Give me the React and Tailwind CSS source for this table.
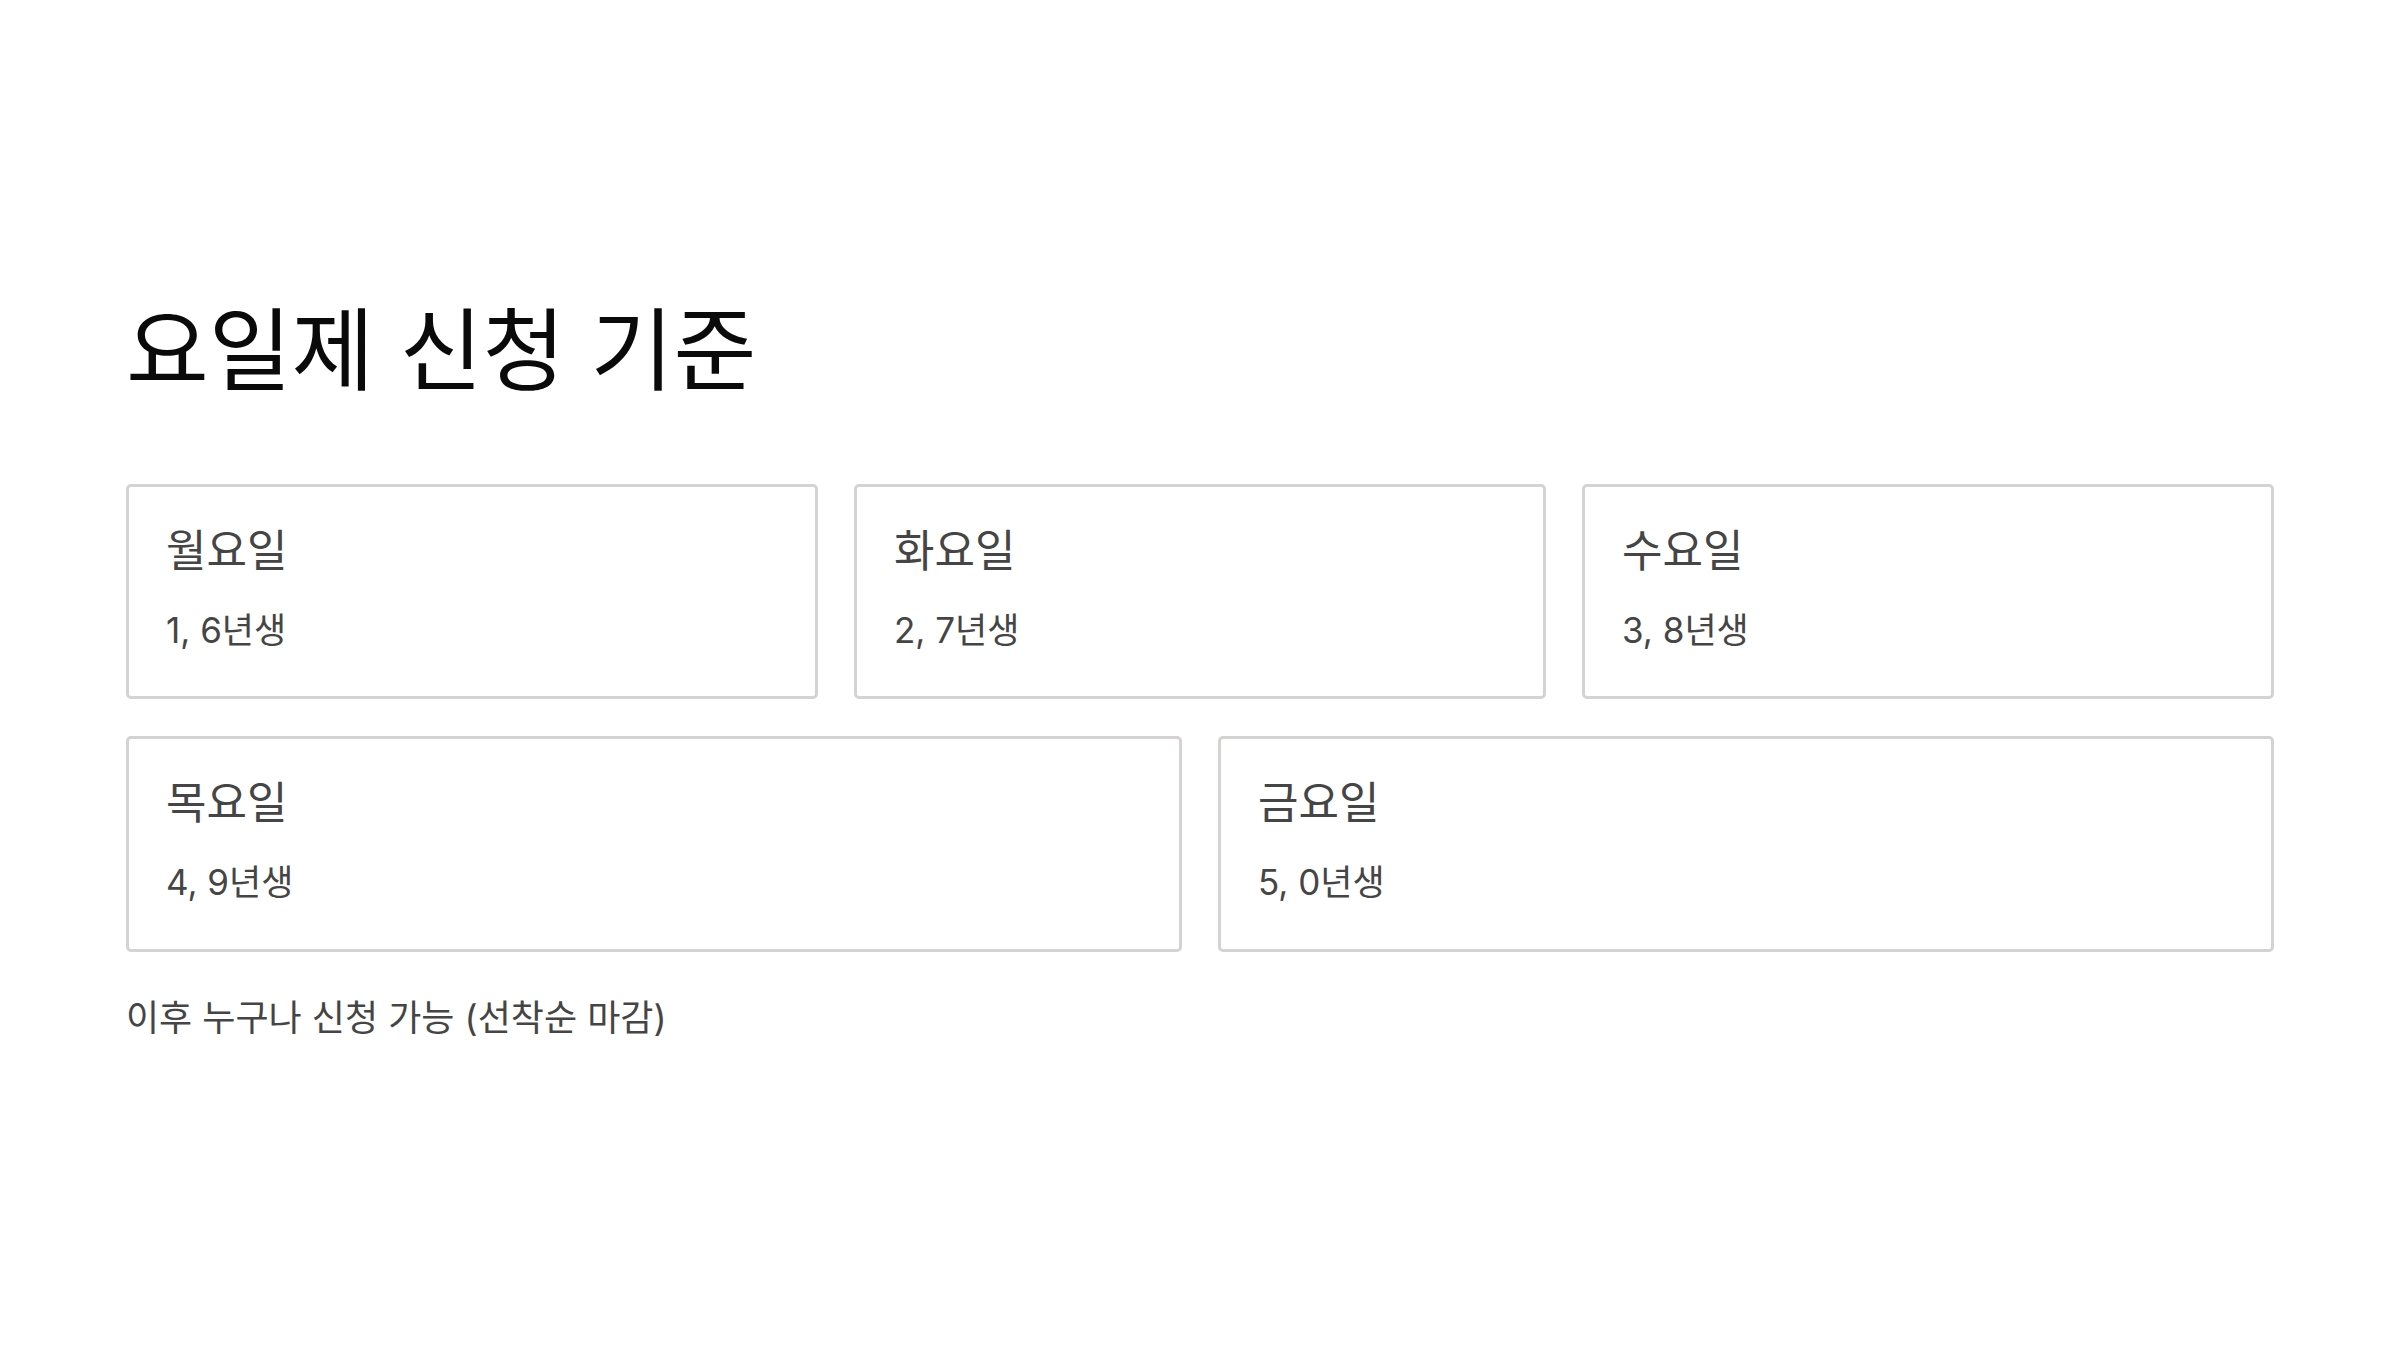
export default function App() {
  const row1 = [
    { day: "월요일", desc: "1, 6년생" },
    { day: "화요일", desc: "2, 7년생" },
    { day: "수요일", desc: "3, 8년생" },
  ];
  const row2 = [
    { day: "목요일", desc: "4, 9년생" },
    { day: "금요일", desc: "5, 0년생" },
  ];
  const Card = ({ day, desc, h }) => (
    <div className={`border-[3px] border-[#d5d3d2] rounded-[5px] bg-white px-[37px] pt-[42px] ${h}`}>
      <div className="text-[44px] leading-none text-[#454545]">{day}</div>
      <div className="mt-[40px] text-[35px] leading-none text-[#454545]">{desc}</div>
    </div>
  );
  return (
    <div
      className="w-[2400px] h-[1350px] bg-white px-[126px] pt-[306px] overflow-hidden"
      style={{ fontFamily: 'Inter, "Noto Sans CJK KR", "Noto Sans", sans-serif' }}
    >
      <h1 className="h-[90px] text-[90px] leading-none font-normal text-[#0a0a0a] whitespace-nowrap">
        요일제 신청 기준
      </h1>
      <div className="mt-[88px] grid grid-cols-3 gap-[36px]">
        {row1.map((c) => (
          <Card key={c.day} {...c} h="h-[215px]" />
        ))}
      </div>
      <div className="mt-[37px] grid grid-cols-2 gap-[36px]">
        {row2.map((c) => (
          <Card key={c.day} {...c} h="h-[216px]" />
        ))}
      </div>
      <p className="mt-[48px] text-[36px] leading-none text-[#454545] whitespace-nowrap">
        이후 누구나 신청 가능 (선착순 마감)
      </p>
    </div>
  );
}
